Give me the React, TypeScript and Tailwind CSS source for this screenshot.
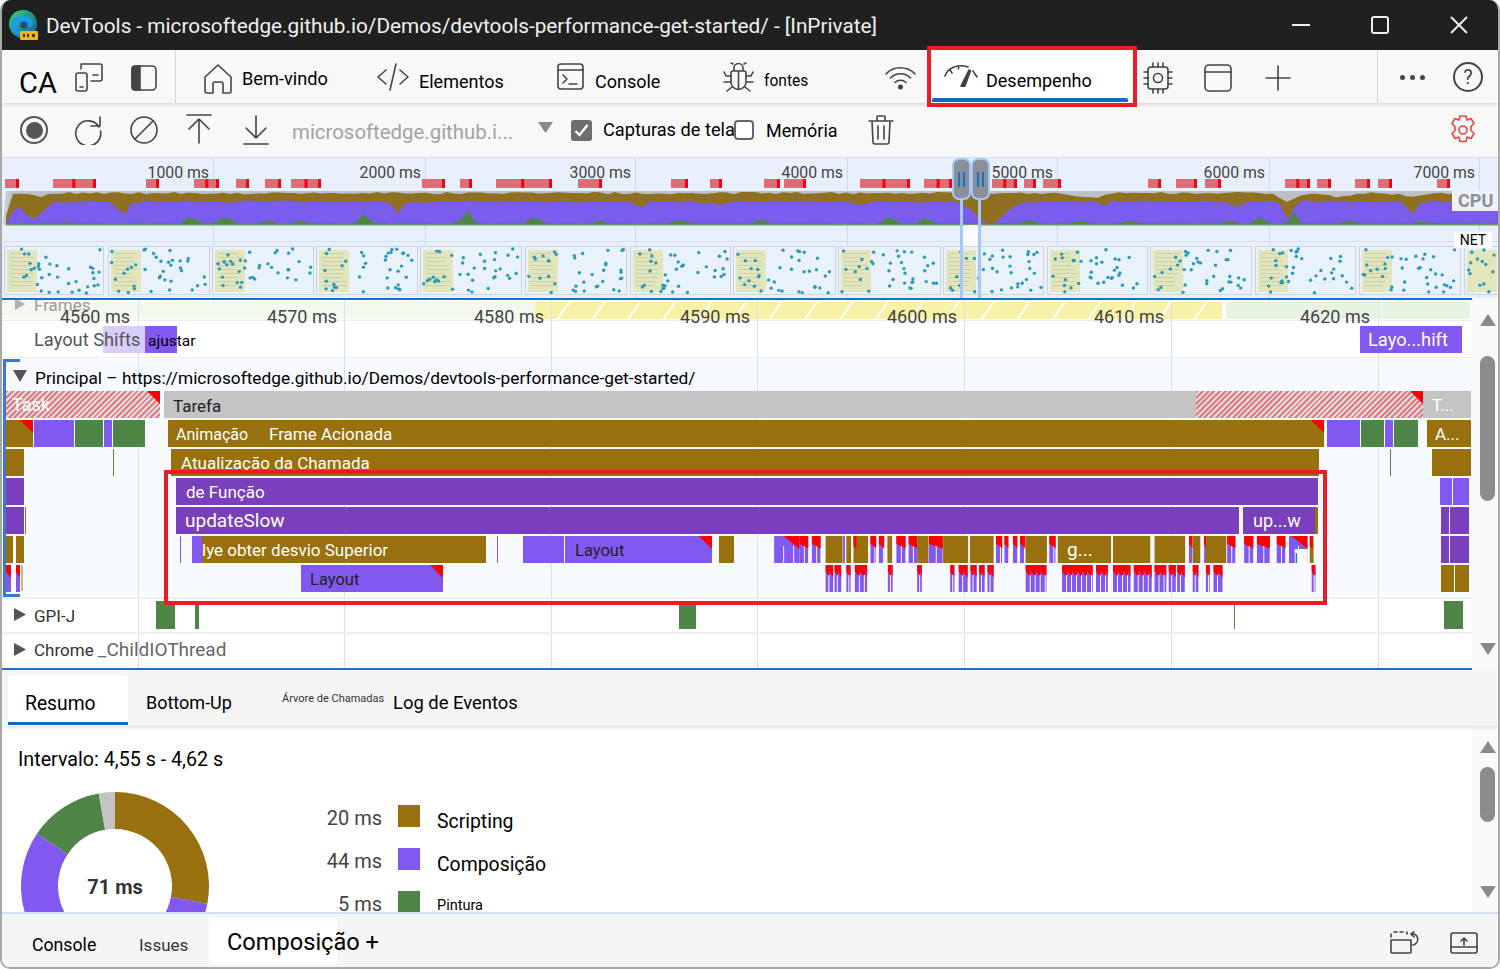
import React from "react";

const rngFactory = (seed: number) => {
  let s = seed;
  return () => {
    s = (s * 16807) % 2147483647;
    return s / 2147483647;
  };
};

const RED_CORNER = "absolute right-0 top-0 w-[13px] h-[13px] bg-[#ff0000] [clip-path:polygon(0_0,100%_0,100%_100%)]";
const BROWN = "bg-[#98700d]";
const PURPLE = "bg-[#8159f0]";
const DARK = "bg-[#7a3fbb]";
const GREEN = "bg-[#4f8546]";
const GRAY = "bg-[#c4c4c4]";
const HATCH = "bg-[repeating-linear-gradient(135deg,#e27a80_0px,#e27a80_2px,#dcdcdc_2px,#dcdcdc_4px)]";

type B = { x: number; e: number; y: number; c: string; t?: string; tx?: number; red?: boolean; fs?: string };
const ROW = [391, 420, 449, 478, 507, 536, 565];
const bars: B[] = [
  { x: 6, e: 160, y: 0, c: HATCH, t: "Task", tx: 6, red: true, fs: "text-[18px] text-white" },
  { x: 164, e: 1471, y: 0, c: GRAY, t: "Tarefa", tx: 9, fs: "text-[17px] text-[#222] pt-[1px]" },
  { x: 1196, e: 1423, y: 0, c: HATCH, red: true },
  { x: 1424, e: 1471, y: 0, c: GRAY, t: "T...", tx: 8, fs: "text-[17px] text-white" },
  { x: 6, e: 33, y: 1, c: BROWN, red: true },
  { x: 34, e: 74, y: 1, c: PURPLE },
  { x: 75, e: 103, y: 1, c: GREEN },
  { x: 104, e: 112, y: 1, c: PURPLE },
  { x: 113, e: 145, y: 1, c: GREEN },
  { x: 168, e: 1324, y: 1, c: BROWN, red: true, t: "Animação", tx: 8, fs: "text-[16px] text-white pt-[1px]" },
  { x: 1327, e: 1360, y: 1, c: PURPLE },
  { x: 1361, e: 1384, y: 1, c: GREEN },
  { x: 1385, e: 1393, y: 1, c: PURPLE },
  { x: 1394, e: 1418, y: 1, c: GREEN },
  { x: 1427, e: 1471, y: 1, c: BROWN, t: "A...", tx: 8, fs: "text-[17px] text-white" },
  { x: 6, e: 24, y: 2, c: BROWN },
  { x: 113, e: 114, y: 2, c: GREEN },
  { x: 171, e: 1319, y: 2, c: BROWN, t: "Atualização da Chamada", tx: 10, fs: "text-[17px] text-white" },
  { x: 1390, e: 1391, y: 2, c: GREEN },
  { x: 1432, e: 1471, y: 2, c: BROWN },
  { x: 6, e: 24, y: 3, c: DARK },
  { x: 176, e: 1318, y: 3, c: DARK, t: "de Função", tx: 10, fs: "text-[17px] text-white" },
  { x: 1440, e: 1452, y: 3, c: PURPLE },
  { x: 1453, e: 1469, y: 3, c: PURPLE },
  { x: 6, e: 24, y: 4, c: DARK },
  { x: 25, e: 26, y: 4, c: BROWN },
  { x: 176, e: 1239, y: 4, c: DARK, t: "updateSlow", tx: 9, fs: "text-[19px] text-white" },
  { x: 1243, e: 1315, y: 4, c: DARK, t: "up...w", tx: 10, fs: "text-[18px] text-white" },
  { x: 1315, e: 1318, y: 4, c: BROWN },
  { x: 1441, e: 1449, y: 4, c: DARK },
  { x: 1450, e: 1469, y: 4, c: DARK },
  { x: 6, e: 13, y: 5, c: BROWN },
  { x: 16, e: 24, y: 5, c: BROWN },
  { x: 180, e: 181, y: 5, c: PURPLE },
  { x: 192, e: 283, y: 5, c: PURPLE, red: true },
  { x: 202, e: 486, y: 5, c: BROWN, t: "lye obter desvio Superior", tx: 0, fs: "text-[17px] text-white" },
  { x: 497, e: 498, y: 5, c: PURPLE },
  { x: 523, e: 564, y: 5, c: PURPLE },
  { x: 565, e: 712, y: 5, c: PURPLE, red: true, t: "Layout", tx: 10, fs: "text-[16.500px] text-[#222] pt-[1px]" },
  { x: 719, e: 734, y: 5, c: BROWN },
  { x: 1441, e: 1449, y: 5, c: DARK },
  { x: 1450, e: 1469, y: 5, c: DARK },
  { x: 301, e: 443, y: 6, c: PURPLE, red: true, t: "Layout", tx: 9, fs: "text-[16.500px] text-[#222] pt-[1px]" },
  { x: 1441, e: 1454, y: 6, c: BROWN },
  { x: 1455, e: 1469, y: 6, c: BROWN },
];

const zx = (p: number) => 760 + p / 2.119;
type M = [number, number, "P" | "B", number?, string?];
const row6: M[] = [
  [30, 84, "P", 1], [84, 102, "P", 1], [110, 128, "P", 1], [139, 175, "B"], [176, 180, "P"], [183, 193, "B"], [198, 229, "B", 2],
  [234, 246, "P", 1], [252, 263, "P", 1], [270, 280, "B"], [289, 308, "P", 1], [315, 333, "P", 1], [333, 357, "B"], [358, 387, "P", 1],
  [388, 441, "B"], [445, 495, "B"], [500, 513, "P", 1], [518, 526, "P", 1], [536, 545, "P", 1], [551, 562, "P", 1], [563, 608, "B"],
  [613, 626, "P", 1], [631, 744, "B"], [748, 827, "B"], [836, 901, "B"], [909, 916, "P", 1], [917, 933, "B"], [941, 945, "P", 1],
  [945, 988, "B"], [990, 1007, "P", 1], [1026, 1045, "P", 1], [1053, 1080, "P", 1], [1095, 1113, "P", 1], [1121, 1160, "P", 1], [1165, 1173, "B", 2],
];
const row7: [number, number][] = [
  [139, 155], [158, 172], [183, 192], [201, 227], [271, 281], [333, 343], [403, 412], [421, 440], [446, 459], [464, 476], [482, 495],
  [563, 607], [640, 705], [712, 737], [748, 785], [792, 830], [836, 861], [866, 881], [884, 900], [917, 929], [945, 953], [961, 980], [1169, 1177],
];

function FlameMicro() {
  const out: React.ReactNode[] = [];
  row6.forEach(([a, b, k, r], i) => {
    const x0 = zx(a);
    const x1 = zx(b);
    const w = x1 - x0;
    const top = 536;
    out.push(<rect key={`a${i}`} x={x0} y={top} width={w} height={27} fill={k === "P" ? "#8159f0" : "#98700d"} />);
    if (r === 1) {
      const col = Math.max(4, Math.min(9, w / 2));
      for (let c = x0 + col; c < x1 - 1; c += col + 1) out.push(<rect key={`g${i}-${c}`} x={c} y={top + 10} width={1} height={17} fill="#f6f9fe" />);
      const tw = Math.min(w, 16);
      out.push(<polygon key={`r${i}`} points={`${x1 - tw},${top} ${x1},${top} ${x1},${top + 13}`} fill="#f00" />);
      if (w < 16) out.push(<polygon key={`q${i}`} points={`${x0},${top} ${x1},${top} ${x1},${top + 12} ${x0},${top + 8}`} fill="#f00" />);
    }
    if (r === 2) out.push(<polygon key={`r${i}`} points={`${x0},${top} ${x0 + 3},${top} ${x0 + 3},${top + 13} ${x0},${top + 10}`} fill="#f00" />);
  });
  row7.forEach(([a, b], i) => {
    const x0 = zx(a);
    const x1 = zx(b);
    const top = 565;
    out.push(<rect key={`s${i}`} x={x0} y={top} width={x1 - x0} height={27} fill="#8159f0" />);
    const cw = Math.max(3, Math.min(5, (x1 - x0) / 2));
    for (let c = x0; c < x1 - 0.5; c += cw) {
      const e = Math.min(c + cw, x1);
      out.push(<polygon key={`t${i}-${c}`} points={`${c},${top} ${e},${top} ${e},${top + 13} ${c},${top + 6}`} fill="#f00" />);
      if (e < x1) out.push(<rect key={`w${i}-${c}`} x={e - 1} y={top + 10} width={1} height={17} fill="#f6f9fe" />);
    }
  });
  out.push(<rect key="hole" x={zx(1133)} y={549} width={13} height={14} fill="#f6f9fe" />);
  out.push(<rect key="holeb" x={zx(1135)} y={553} width={1.5} height={10} fill="#2b7a9c" />);
  out.push(<rect key="l1" x={6} y={565} width={5} height={27} fill="#8159f0" />);
  out.push(<polygon key="l2" points="6,565 11,565 11,578 6,572" fill="#f00" />);
  out.push(<rect key="l3" x={16} y={565} width={4} height={27} fill="#8159f0" />);
  out.push(<polygon key="l4" points="16,565 20,565 20,578 16,572" fill="#f00" />);
  out.push(<rect key="l5" x={21} y={565} width={2} height={26} fill="#c9b98a" />);
  return (
    <svg className="absolute left-[-2px] top-0" width={1500} height={370} viewBox="0 298 1500 370">
      {out}
    </svg>
  );
}

const RED_RANGES: [number, number][] = [
  [5, 19], [53, 96], [146, 159], [194, 219], [236, 249], [265, 281], [291, 321], [422, 445], [460, 472], [496, 552], [578, 602], [671, 688], [710, 722],
  [764, 780], [784, 806], [860, 910], [924, 952], [992, 1017], [1024, 1036], [1043, 1061], [1148, 1161], [1176, 1197], [1205, 1221], [1285, 1310],
  [1317, 1331], [1355, 1370], [1378, 1392], [1437, 1450],
];
const DIPS: [number, number, number][] = [
  [33, 17, 9], [123, 14, 4], [398, 12, 4], [640, 6, 5], [720, 3, 8], [860, 4, 6], [990, 22, 14], [1103, 6, 3], [1235, 5, 5], [1288, 18, 4], [1411, 14, 4], [1480, 13, 4],
];
const BUMPS: [number, number, number][] = [
  [68, 1, 6], [191, 8, 4], [226, 7, 5], [268, 3, 4], [302, 3, 4], [364, 10, 4], [467, 13, 4], [534, 8, 4], [600, 3, 5], [680, 3, 6], [760, 4, 4], [890, 8, 4], [925, 6, 4], [1030, 4, 4],
  [1080, 3, 5], [1130, 3, 5], [1230, 3, 4], [1260, 7, 4], [1294, 12, 3], [1350, 3, 5], [1420, 2, 5],
];
const g = (x: number, c: number, s: number) => Math.exp(-((x - c) * (x - c)) / (2 * s * s));

function CpuChart() {
  const r = rngFactory(91);
  const xs: number[] = [];
  for (let x = 6; x <= 1500; x += 7) xs.push(x);
  xs.push(1500);
  const brown = xs.map((x) => {
    const ramp = x < 10 ? (10 - x) * 6 : 0;
    let v = 192 + r() * 2.2 + ramp;
    v += 5 * g(x, 1085, 12) + 8 * g(x, 1288, 8) + 4 * g(x, 1340, 10) + 3 * g(x, 40, 6) + 3 * g(x, 1410, 10) + 2 * g(x, 1100, 4);
    return v;
  });
  const purple = xs.map((x) => {
    const ramp = x < 16 ? (16 - x) * 2.4 : 0;
    let v = 200.5 + r() * 2.2 + ramp;
    DIPS.forEach(([c, d, s]) => (v += d * g(x, c, s)));
    return Math.min(v, 224);
  });
  const green = xs.map((x) => {
    let v = 224 - r() * 1;
    BUMPS.forEach(([c, d, s]) => (v -= d * g(x, c, s)));
    return v;
  });
  const area = (ys: number[]) => `M6 225 ` + xs.map((x, i) => `L${x} ${ys[i].toFixed(1)}`).join(" ") + ` L1500 225 Z`;
  return (
    <svg className="absolute left-[-2px] top-0" width={1500} height={141} viewBox="0 157 1500 141">
      {RED_RANGES.map(([a, b], i) => (
        <g key={i}>
          <rect x={a} y={179} width={b - a} height={9} fill="#e06c78" />
          <rect x={b - 3} y={179} width={3} height={9} fill="#f60012" />
          {b - a > 24 && <rect x={a + (b - a) * 0.45} y={179} width={3} height={9} fill="#f60012" />}
        </g>
      ))}
      <rect x={6} y={191} width={1494} height={34} fill="#bcc0c9" />
      <polygon points="3,225 6,191 10,191 6,225" fill="#c7ccd4" />
      <path d={area(brown)} fill="#8f7020" />
      <path d={area(purple)} fill="#7b5dee" />
      <path d={area(green)} fill="#4f8546" />
      <rect x={6} y={224} width={1494} height={1.5} fill="#6a9a62" />
    </svg>
  );
}

const THUMBS: [number, number][] = [
  [4, 104], [108, 210], [212, 314], [316, 418], [420, 522], [525, 627], [630, 731], [733, 836], [838, 941], [943, 1044], [1047, 1148], [1150, 1252], [1255, 1356], [1359, 1461], [1464, 1500],
];
function Thumbs() {
  const r = rngFactory(4242);
  return (
    <svg className="absolute left-[-2px] top-0" width={1500} height={141} viewBox="0 157 1500 141">
      {THUMBS.map(([a, b], i) => {
        const lines: React.ReactNode[] = [];
        for (let l = 0; l < 9; l++) lines.push(<rect key={l} x={a + 6} y={253 + l * 4} width={17 + r() * 8} height={1} fill="#cdcdab" />);
        const dots: React.ReactNode[] = [];
        const w = b - a;
        const n = Math.round(w * 0.36);
        for (let d = 0; d < n; d++) {
          const px = a + 3 + r() * (w - 6);
          const py = 249 + r() * 44;
          dots.push(<circle key={d} cx={px} cy={py} r={1.7} fill="#2a9ab8" />);
        }
        return (
          <g key={i}>
            <rect x={a + 0.5} y={246.5} width={w - 1} height={48} fill="#e9f1fb" stroke="#ccd3df" />
            <rect x={a + 3} y={250} width={Math.min(30, w - 6)} height={42} fill="#e2e6bc" />
            {w > 50 && lines}
            {dots}
          </g>
        );
      })}
    </svg>
  );
}

function Donut() {
  const cx = 95;
  const cy = 96;
  const R = 94;
  const r0 = 57;
  const seg = (a: number, b: number) => {
    const p = (ang: number, rad: number) => {
      const t = ((ang - 90) * Math.PI) / 180;
      return `${(cx + rad * Math.cos(t)).toFixed(2)} ${(cy + rad * Math.sin(t)).toFixed(2)}`;
    };
    const large = b - a > 180 ? 1 : 0;
    return `M${p(a, R)} A${R} ${R} 0 ${large} 1 ${p(b, R)} L${p(b, r0)} A${r0} ${r0} 0 ${large} 0 ${p(a, r0)} Z`;
  };
  return (
    <svg width={190} height={192} viewBox="0 0 190 192" className="block">
      <path d={seg(0, 101)} fill="#98700d" />
      <path d={seg(101, 304)} fill="#8159f0" />
      <path d={seg(304, 350)} fill="#4f8546" />
      <path d={seg(350, 360)} fill="#c4c4c4" />
    </svg>
  );
}

const ic = "fill-none stroke-[#444] stroke-[1.6]";
const Svg = ({ w, h, vb, children, cls = "" }: { w: number; h: number; vb: string; children: React.ReactNode; cls?: string }) => (
  <svg width={w} height={h} viewBox={vb} className={`${ic} shrink-0 ${cls}`} strokeLinecap="round" strokeLinejoin="round">
    {children}
  </svg>
);

const Tri = ({ down, cls = "" }: { down?: boolean; cls?: string }) => (
  <svg width={16} height={12} viewBox="0 0 16 12" className={`block ${cls}`}>
    <polygon points={down ? "0,0 16,0 8,12" : "0,12 16,12 8,0"} fill="#8a8a8a" />
  </svg>
);
const Caret = ({ cls }: { cls: string }) => (
  <svg width={12} height={13} viewBox="0 0 12 13" className={`absolute left-[12px] ${cls}`}>
    <polygon points="0,0 12,6.500 0,13" fill="#555" />
  </svg>
);

const GRID = [138, 344, 551, 757, 964, 1171, 1378];
const TICKS: [string, number][] = [["4560 ms", 130], ["4570 ms", 337], ["4580 ms", 544], ["4590 ms", 750], ["4600 ms", 957], ["4610 ms", 1164], ["4620 ms", 1370]];
const OV: [string, number][] = [["1000 ms", 209], ["2000 ms", 421], ["3000 ms", 631], ["4000 ms", 843], ["5000 ms", 1053], ["6000 ms", 1265], ["7000 ms", 1475]];
const OVG = [213, 425, 635, 847, 1057, 1269, 1479];

export default function App() {
  return (
    <div className="relative w-[1500px] h-[969px] overflow-hidden bg-white">
      <div className="flex flex-col w-[1500px] h-[969px] overflow-hidden rounded-[10px] border-x-2 border-b-2 border-[#a8a8a8] bg-white font-['Roboto',sans-serif] text-black">
        {/* Title bar */}
        <div className="h-[50px] shrink-0 bg-[#202020] flex items-center pl-[6px] text-[#f0f0f0]">
          <svg width={32} height={32} viewBox="0 0 32 32" className="shrink-0">
            <defs>
              <linearGradient id="edgeA" x1="0" y1="0" x2="1" y2="1">
                <stop offset="0" stopColor="#3bd16f" />
                <stop offset="1" stopColor="#0c59a4" />
              </linearGradient>
            </defs>
            <circle cx={15} cy={15} r={14} fill="url(#edgeA)" />
            <path d="M3 14C6 5 22 4 25 13c1 4-3 6-7 5 2-3-1-6-5-5-4 1-5 6-2 10 2 3 6 4 9 3-8 3-18-3-17-12z" fill="#1b9de2" />
            <circle cx={16} cy={16} r={3.5} fill="#174f8a" />
            <rect x={12} y={22} width={18} height={9} rx={1} fill="#f2b705" />
            <rect x={15} y={25} width={2} height={3} fill="#333" />
            <rect x={19} y={25} width={2} height={3} fill="#333" />
            <rect x={24} y={25} width={3} height={3} fill="#333" />
          </svg>
          <span className="ml-[6px] mt-[3px] text-[20.750px] whitespace-nowrap">DevTools - microsoftedge.github.io/Demos/devtools-performance-get-started/ - [InPrivate]</span>
          <div className="ml-auto flex items-center">
            <svg width={18} height={2} viewBox="0 0 18 2" className="mr-[61px]"><rect width={18} height={2} fill="#eee" /></svg>
            <svg width={18} height={18} viewBox="0 0 18 18" className="mr-[61px] fill-none stroke-[#eee] stroke-2"><rect x={1} y={1} width={16} height={16} rx={2} /></svg>
            <svg width={18} height={18} viewBox="0 0 18 18" className="mr-[30px] stroke-[#eee] stroke-2"><path d="M1 1L17 17M17 1L1 17" /></svg>
          </div>
        </div>

        {/* Main tabs */}
        <div className="h-[53px] shrink-0 bg-[#f8f8f8] flex items-center shadow-[0_2px_3px_rgba(0,0,0,0.12)] relative z-10">
          <span className="ml-[17px] text-[29px] leading-none mt-[13px] w-[56px]">CA</span>
          <Svg w={28} h={30} vb="0 0 28 30" cls="mt-[2px]">
            <rect x={1} y={10} width={11} height={18} rx={2} />
            <path d="M6 1h19a2 2 0 0 1 2 2v13a2 2 0 0 1-2 2H16M6 6V3a2 2 0 0 1 1-2M18 12h5M5 24h3" />
          </Svg>
          <Svg w={26} h={26} vb="0 0 26 26" cls="ml-[28px] mt-[2px]">
            <rect x={1} y={1} width={24} height={24} rx={4} />
            <path d="M4 1h5v24H4a3 3 0 0 1-3-3V4a3 3 0 0 1 3-3z" fill="#444" />
          </Svg>
          <div className="w-px h-[53px] bg-[#d5d5d5] ml-[18px]" />
          <Svg w={28} h={30} vb="0 0 28 30" cls="ml-[28px] mt-[4px]">
            <path d="M1 13L14 1l13 12v14a2 2 0 0 1-2 2h-6v-9a2 2 0 0 0-2-2h-6a2 2 0 0 0-2 2v9H3a2 2 0 0 1-2-2z" />
          </Svg>
          <span className="ml-[10px] text-[18.200px] w-[135px] mt-[4px] whitespace-nowrap">Bem-vindo</span>
          <Svg w={32} h={28} vb="0 0 32 28">
            <path d="M9 7L1 14l8 7M23 7l8 7-8 7M19 1l-6 26" />
          </Svg>
          <span className="ml-[10px] text-[18px] w-[138px] mt-[10px]">Elementos</span>
          <Svg w={27} h={27} vb="0 0 27 27">
            <rect x={1} y={1} width={25} height={25} rx={3} />
            <path d="M1 7h25M6 12l4 4-4 4M12 21h8" />
          </Svg>
          <span className="ml-[11px] text-[18px] w-[128px] mt-[10px]">Console</span>
          <Svg w={31} h={30} vb="0 0 31 30" cls="mt-[0px]">
            <path d="M10 9h11a2 2 0 0 1 2 2v9a7.500 7.500 0 0 1-15 0v-9a2 2 0 0 1 2-2zM11 9V6a4.500 4.500 0 0 1 9 0v3M15.500 9v18M8 14H3L1 10M23 14h5l2-4M8 20H1M23 20h7M9 25l-5 4M22 25l5 4M10 2L8 1M21 2l2-1" />
          </Svg>
          <span className="ml-[10px] text-[15.600px] w-[121px] mt-[10px]">fontes</span>
          <Svg w={31} h={24} vb="0 0 31 24" cls="mt-[2px] stroke-2">
            <path d="M1 8a20 20 0 0 1 29 0M5.500 12a14 14 0 0 1 20 0M10 16.500a8 8 0 0 1 11 0" />
            <circle cx={15.500} cy={21} r={1.700} fill="#444" />
          </Svg>
          <div className="relative ml-[16px] w-[199px] h-[53px] bg-white flex items-center">
            <Svg w={34} h={22} vb="0 0 34 22" cls="ml-[12px] mt-[-1px]">
              <path d="M1 11C3 5 8 2 14 1c4-.5 7 0 10 1M29 6l4 6M6 5l2 3M14.500 1v3" />
              <path d="M17 21l8-16 1.500 1-6 16z" fill="#444" />
            </Svg>
            <span className="ml-[8px] text-[18px] mt-[7px]">Desempenho</span>
            <div className="absolute left-0 right-[3px] bottom-[1px] h-[4px] bg-[#0f6cbd] rounded-t-[2px]" />
          </div>
          <Svg w={32} h={32} vb="0 0 32 32" cls="ml-[11px] mt-[2px]">
            <rect x={6} y={5} width={20} height={22} rx={3} />
            <circle cx={16} cy={16} r={4.500} />
            <path d="M11 1v4M16 1v4M21 1v4M11 27v4M16 27v4M21 27v4M2 10h4M2 16h4M2 22h4M26 10h4M26 16h4M26 22h4" />
          </Svg>
          <Svg w={28} h={28} vb="0 0 28 28" cls="ml-[30px] mt-[2px] stroke-2">
            <rect x={1} y={1} width={26} height={26} rx={4} />
            <path d="M1 8h26" />
          </Svg>
          <Svg w={26} h={26} vb="0 0 26 26" cls="ml-[33px] mt-[2px]">
            <path d="M13 1v24M1 13h24" />
          </Svg>
          <div className="w-px h-[53px] bg-[#d5d5d5] ml-[86px]" />
          <div className="ml-[22px] flex gap-[5px] mt-[2px]">
            <i className="block w-[5px] h-[5px] rounded-full bg-[#444]" />
            <i className="block w-[5px] h-[5px] rounded-full bg-[#444]" />
            <i className="block w-[5px] h-[5px] rounded-full bg-[#444]" />
          </div>
          <div className="ml-[28px] w-[30px] h-[30px] rounded-full border-2 border-[#444] flex items-center justify-center text-[20px] text-[#444]">?</div>
        </div>

        {/* Toolbar */}
        <div className="h-[54px] shrink-0 bg-[#f8f8f8] flex items-center">
          <div className="ml-[18px] w-[28px] h-[28px] rounded-full border-2 border-[#555] flex items-center justify-center">
            <div className="w-[17px] h-[17px] rounded-full bg-[#555]" />
          </div>
          <Svg w={30} h={30} vb="0 0 30 30" cls="ml-[25px]">
            <path d="M26 12A12.500 12.500 0 1 0 27.500 16M27 2v9h-9" />
          </Svg>
          <Svg w={28} h={28} vb="0 0 28 28" cls="ml-[27px]">
            <circle cx={14} cy={14} r={13} />
            <path d="M23 5L5 23" />
          </Svg>
          <Svg w={26} h={30} vb="0 0 26 30" cls="ml-[28px] mt-[-3px]">
            <path d="M1 1h24M13 6v23M3 15l10-10 10 10" />
          </Svg>
          <Svg w={26} h={30} vb="0 0 26 30" cls="ml-[31px]">
            <path d="M13 1v21M3 13l10 10 10-10M1 29h24" />
          </Svg>
          <span className="ml-[23px] mt-[4px] text-[20.400px] text-[#a3a3a3] w-[246px] whitespace-nowrap">microsoftedge.github.i...</span>
          <svg width={15} height={11} viewBox="0 0 15 11" className="mt-[-6px]"><polygon points="0,0 15,0 7.500,11" fill="#8a8a8a" /></svg>
          <div className="ml-[18px] w-[21px] h-[21px] rounded-[3px] bg-[#6e6e6e] flex items-center justify-center">
            <svg width={15} height={13} viewBox="0 0 15 13" className="fill-none stroke-white stroke-[2.4]"><path d="M1.500 7l4 4 8-10" /></svg>
          </div>
          <span className="ml-[11px] text-[18.200px] w-[131px] whitespace-nowrap">Capturas de tela</span>
          <div className="w-[20px] h-[20px] rounded-[4px] border-2 border-[#666] bg-white" />
          <span className="ml-[12px] text-[18px] w-[102px]">Memória</span>
          <Svg w={26} h={30} vb="0 0 26 30">
            <path d="M1 6h24M9 6V2a1 1 0 0 1 1-1h6a1 1 0 0 1 1 1v4M4 6l1 21a2 2 0 0 0 2 2h12a2 2 0 0 0 2-2l1-21M10 11v13M16 11v13" />
          </Svg>
          <svg width={28} height={30} viewBox="0 0 28 30" className="ml-auto mr-[21px] fill-none stroke-[#e8413f] stroke-[1.6]" strokeLinejoin="round">
            <path d="M11 1h6l1 4 4-1.500 3 5-3 3v4l3 3-3 5-4-1.500-1 4.500h-6l-1-4.500-4 1.500-3-5 3-3v-4l-3-3 3-5 4 1.500z" />
            <circle cx={14} cy={15} r={4} />
          </svg>
        </div>

        {/* Overview */}
        <div className="relative h-[141px] shrink-0 bg-[#e9f0fb]">
          <div className="absolute left-0 right-0 top-0 h-px bg-[#d2e0f5]" />
          {OVG.map((x) => (
            <div key={x} className="absolute top-0 bottom-0 w-px bg-[#c9daf5]" style={{ left: x - 2 }} />
          ))}
          {OV.map(([t, e]) => (
            <span key={t} className="absolute top-[7px] text-[15.800px] leading-[18px] text-[#444] whitespace-nowrap -translate-x-full" style={{ left: e - 2 }}>{t}</span>
          ))}
          <CpuChart />
          <div className="absolute left-0 right-0 top-[84px] h-px bg-[#d8dee8]" />
          <Thumbs />
          <div className="absolute right-0 top-[34px] w-[46px] h-[20px] bg-[#eef1f6] text-[18px] leading-[20px] font-bold text-[#8a8f99] pl-[6px]">CPU</div>
          <div className="absolute right-[6px] top-[75px] w-[38px] h-[16px] bg-white text-[14px] leading-[16px] text-center">NET</div>
          <div className="absolute left-[961px] top-[68px] w-[16px] h-[21px] bg-white/80" />
          <div className="absolute left-[958px] top-[40px] bottom-0 w-[3px] bg-[#a6c8f8]" />
          <div className="absolute left-[976px] top-[40px] bottom-0 w-[3px] bg-[#a6c8f8]" />
          <div className="absolute left-[950px] top-[1px] w-[19px] h-[42px] rounded-[7px] bg-[#8a8f99] border-2 border-[#a6c8f8] flex items-center justify-center gap-[3px]">
            <i className="block w-[2px] h-[15px] bg-[#1a6fc9]" /><i className="block w-[2px] h-[15px] bg-[#1a6fc9]" />
          </div>
          <div className="absolute left-[969px] top-[1px] w-[19px] h-[42px] rounded-[7px] bg-[#8a8f99] border-2 border-[#a6c8f8] flex items-center justify-center gap-[3px]">
            <i className="block w-[2px] h-[15px] bg-[#1a6fc9]" /><i className="block w-[2px] h-[15px] bg-[#1a6fc9]" />
          </div>
        </div>

        {/* Flame chart */}
        <div className="flex h-[372px] shrink-0">
          <div className="relative w-[1470px] overflow-hidden bg-white">
            <div className="absolute left-0 right-0 top-[61px] bottom-[75px] bg-[#f6f9fe]" />
            <div className="absolute left-[533px] top-[4px] w-[687px] h-[17px] bg-[#f8f2a8] bg-[repeating-linear-gradient(125deg,transparent_0px,transparent_27px,#ffffff_27px,#ffffff_29px)]" />
            <div className="absolute left-[1224px] top-[4px] w-[244px] h-[17px] bg-[#e8f4e2]" />
            <div className="absolute left-0 top-[4px] w-[533px] h-[17px] bg-[#f3f9ef]" />
            <span className="absolute left-[32px] top-[-3px] text-[17px] leading-[20px] text-[#9a9a9a]">Frames</span>
            <svg width={12} height={12} viewBox="0 0 12 12" className="absolute left-[12px] top-0"><polygon points="1,0 11,6 1,12" fill="#b0b0b0" /></svg>
            <div className="absolute left-0 right-0 top-[22px] h-px bg-[#eeeeee]" />
            <div className="absolute left-0 right-0 top-[59px] h-px bg-[#eeeeee]" />
            {GRID.map((x) => (
              <div key={x} className="absolute top-0 bottom-0 w-px bg-[#d5e2f6]" style={{ left: x - 2 }} />
            ))}
            {TICKS.map(([t, e]) => (
              <span key={t} className="absolute top-[8px] text-[18px] leading-[22px] text-[#444] -translate-x-full whitespace-nowrap" style={{ left: e - 2 }}>{t}</span>
            ))}
            <div className="absolute left-[101px] top-[28px] w-[74px] h-[27px] bg-[#8159f0]" />
            <span className="absolute left-[32px] top-[28px] h-[27px] w-[111px] bg-white/70 text-[18.300px] leading-[27px] text-[#555] whitespace-nowrap">Layout Shifts</span>
            <span className="absolute left-[146px] top-[28px] text-[15.500px] leading-[30px]">ajustar</span>
            <div className="absolute left-[1358px] top-[28px] w-[102px] h-[27px] bg-[#8159f0] text-white text-[18.300px] leading-[27px] pl-[8px]">Layo...hift</div>

            <div className="absolute left-[1px] top-[61px] w-[17px] h-[238px] border-l-[3px] border-y-[3px] border-[#3c78d0]" />
            <div className="absolute left-[33px] top-[68px] text-[17.300px] leading-[24px] whitespace-nowrap">Principal – https://microsoftedge.github.io/Demos/devtools-performance-get-started/</div>
            <svg width={14} height={12} viewBox="0 0 14 12" className="absolute left-[11px] top-[72px]"><polygon points="0,0 14,0 7,12" fill="#555" /></svg>

            {bars.map((b, i) => (
              <div
                key={i}
                className={`absolute h-[27px] overflow-hidden whitespace-nowrap ${b.c}`}
                style={{ left: b.x - 2, top: ROW[b.y] - 298, width: b.e - b.x }}
              >
                {b.t && (
                  <span className={`absolute top-0 leading-[28px] ${b.fs}`} style={{ left: b.tx }}>{b.t}</span>
                )}
                {b.red && <span className={RED_CORNER} />}
              </div>
            ))}
            <span className="absolute left-[267px] top-[122px] text-[17px] leading-[28px] text-white whitespace-nowrap">Frame Acionada</span>
            <FlameMicro />
            <div className="absolute left-[1065px] top-[238px] text-[19px] leading-[28px] text-white">g...</div>

            <div className="absolute left-0 right-0 top-[299px] h-[2px] bg-[#eeeeee]" />
            <div className="absolute left-0 right-0 top-[334px] h-[2px] bg-[#eeeeee]" />
            <div className="absolute left-0 top-[301px] w-full h-[33px]">
              <div className="relative h-full">
                <Caret cls="top-[9px]" />
                <span className="absolute left-[32px] top-[5px] text-[17px] leading-[24px] text-[#333]">GPI-J</span>
                <div className="absolute left-[154px] top-[2px] w-[19px] h-[28px] bg-[#4f8546]" />
                <div className="absolute left-[193px] top-[2px] w-[4px] h-[28px] bg-[#4f8546]" />
                <div className="absolute left-[677px] top-[2px] w-[17px] h-[28px] bg-[#4f8546]" />
                <div className="absolute left-[1232px] top-[2px] w-px h-[28px] bg-[#4f8546]" />
                <div className="absolute left-[1442px] top-[2px] w-[19px] h-[28px] bg-[#4f8546]" />
              </div>
            </div>
            <div className="absolute left-0 top-[336px] w-full h-[32px]">
              <div className="relative h-full">
                <Caret cls="top-[9px]" />
                <span className="absolute left-[32px] top-[4px] text-[17px] leading-[24px] whitespace-nowrap text-[#333]">Chrome <span className="text-[19px] text-[#666]">_ChildIOThread</span></span>
              </div>
            </div>
            <div className="absolute left-0 right-0 top-0 h-[2px] bg-[#1a73c8]" />
            <div className="absolute left-0 right-0 bottom-0 h-[2px] bg-[#1a73c8]" />
          </div>
          <div className="w-[26px] bg-[#fafafa] flex flex-col items-center pt-[16px] pb-[15px] pl-[5px]">
            <Tri />
            <div className="w-[15px] h-[145px] mt-[30px] rounded-full bg-[#8c8c8c]" />
            <Tri down cls="mt-auto" />
          </div>
        </div>

        {/* Detail tabs */}
        <div className="h-[56px] shrink-0 bg-[#f5f5f5] flex items-end relative z-10 shadow-[0_2px_3px_rgba(0,0,0,0.1)]">
          <div className="ml-[6px] mb-[1px] w-[120px] h-[50px] bg-white rounded-t-[3px] border-b-[3px] border-[#0f6cbd] flex items-center pl-[17px] pt-[12px] text-[19.300px]">Resumo</div>
          <span className="ml-[18px] mb-[10px] text-[18px] w-[136px]">Bottom-Up</span>
          <span className="mb-[19px] text-[11px] w-[111px] whitespace-nowrap text-[#333]">Árvore de Chamadas</span>
          <span className="mb-[9px] text-[18.400px]">Log de Eventos</span>
        </div>

        {/* Summary */}
        <div className="flex h-[186px] shrink-0 overflow-hidden bg-white">
          <div className="flex-1 min-w-0 pl-[16px] pt-[22px] overflow-hidden">
            <div className="text-[19.700px] leading-[24px]">Intervalo: 4,55 s - 4,62 s</div>
            <div className="flex mt-[18px]">
              <div className="relative w-[193px] ml-[2px] h-[192px] shrink-0">
                <Donut />
                <span className="absolute left-0 w-[190px] top-[85px] text-center text-[20px] leading-[24px] font-bold text-[#333]">71 ms</span>
              </div>
              <div className="mt-[15px] flex flex-col gap-[21px]">
                <div className="flex items-start h-[22px]">
                  <span className="w-[169px] text-right text-[20px] leading-[26px] text-[#444]">20 ms</span>
                  <span className="ml-[16px] w-[22px] h-[22px] bg-[#98700d] shrink-0" />
                  <span className="ml-[17px] text-[19.400px] leading-[26px] mt-[4px]">Scripting</span>
                </div>
                <div className="flex items-start h-[22px]">
                  <span className="w-[169px] text-right text-[20px] leading-[26px] text-[#444]">44 ms</span>
                  <span className="ml-[16px] w-[22px] h-[22px] bg-[#8159f0] shrink-0" />
                  <span className="ml-[17px] text-[19.400px] leading-[26px] mt-[4px]">Composição</span>
                </div>
                <div className="flex items-start h-[22px]">
                  <span className="w-[169px] text-right text-[20px] leading-[26px] text-[#444]">5 ms</span>
                  <span className="ml-[16px] w-[22px] h-[22px] bg-[#4f8546] shrink-0" />
                  <span className="ml-[17px] text-[14.500px] leading-[22px] mt-[4px]">Pintura</span>
                </div>
              </div>
            </div>
          </div>
          <div className="w-[26px] bg-[#fafafa] flex flex-col items-center pt-[15px] pb-[14px] pl-[5px]">
            <Tri />
            <div className="w-[15px] h-[55px] mt-[14px] rounded-full bg-[#8c8c8c]" />
            <Tri down cls="mt-auto" />
          </div>
        </div>

        {/* Bottom drawer tabs */}
        <div className="flex-1 bg-[#f5f5f5] border-t-2 border-[#d3e1f7] flex items-center">
          <span className="ml-[30px] text-[17.700px] w-[107px] mt-[10px]">Console</span>
          <span className="text-[17px] w-[70px] text-[#333] mt-[10px]">Issues</span>
          <div className="w-[128px] h-[48px] bg-white rounded-[4px] flex items-center pl-[18px] pt-[5px] text-[23.600px] whitespace-nowrap">Composição +</div>
          <Svg w={30} h={24} vb="0 0 30 24" cls="ml-auto mr-[30px] mt-[4px]">
            <path d="M1 6V3M4 1h3M10 1h3M17 1v2M1 9h20v12a1 1 0 0 1-1 1H2a1 1 0 0 1-1-1zM21 3l3-2M21 3l3 3M21 3c8-1 9 9 2 11" />
          </Svg>
          <Svg w={28} h={22} vb="0 0 28 22" cls="mr-[20px] mt-[4px] stroke-[#222]">
            <rect x={1} y={1} width={26} height={20} rx={2} />
            <path d="M1 15h26M14 13V6M11 9l3-3 3 3" />
          </Svg>
        </div>
      </div>

      {/* Annotation frames */}
      <div className="absolute left-[927px] top-[46px] w-[210px] h-[61px] border-[4px] border-[#ed1c24] z-20 pointer-events-none" />
      <div className="absolute left-[164px] top-[470px] w-[1163px] h-[135px] border-[4px] border-[#ed1c24] z-20 pointer-events-none" />
    </div>
  );
}
